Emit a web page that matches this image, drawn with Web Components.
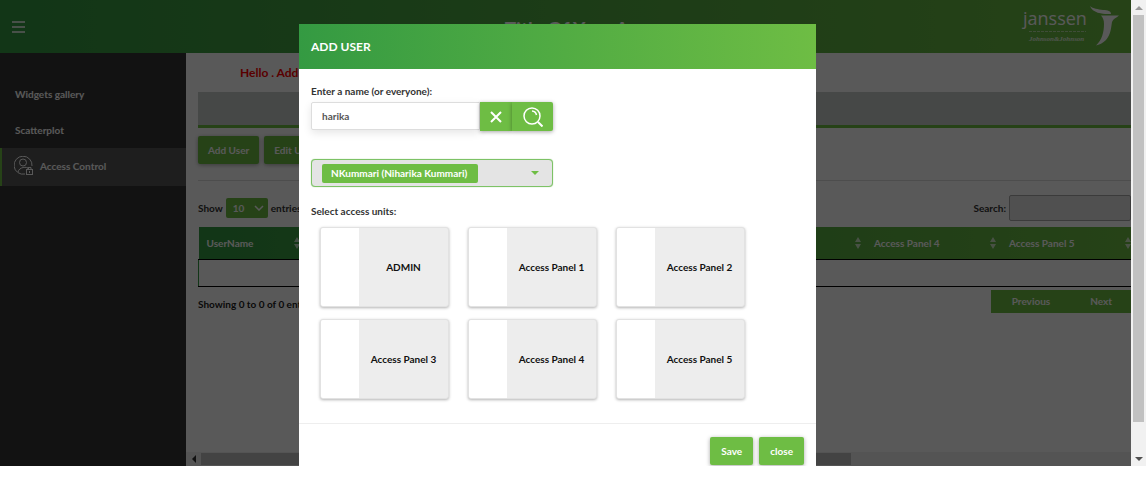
<!DOCTYPE html>
<html lang="en">
<head>
<meta charset="utf-8">
<title>Access Control</title>
<style>
html,body{margin:0;height:100%;overflow:hidden;background:#fff}
body{font:bold 10px/16px Lato,"Open Sans",sans-serif;color:#333;
--green:#6ebd44;--deep:#349a42}
</style>
</head>
<body>
<app-window></app-window>
<script>
const base = `*{box-sizing:border-box}
button,input,select{font:inherit;color:inherit;margin:0;border:0;outline:0}
svg{display:block}
.btn{background:var(--green);color:#fff;border-radius:2px;box-shadow:0 1px 4px rgba(0,0,0,.35);height:28px;padding:0 11px;white-space:nowrap}`;

function component(name, css, html) {
  const template = document.createElement('template');
  template.innerHTML = `<style>${base}${css}</style>${html}`;
  customElements.define(name, class extends HTMLElement {
    constructor() {
      super();
      this.attachShadow({ mode: 'open' }).append(template.content.cloneNode(true));
    }
  });
}

component('brand-logo', `:host{display:block}`, `
<svg width="98" height="42" viewBox="0 0 98 42" fill="#fff" role="img" aria-label="Janssen">
<text x="2" y="19" font-family="Open Sans,sans-serif" font-size="18" font-weight="400">janssen</text>
<path d="M8 25.500H65" stroke="#fff" stroke-width="1" stroke-dasharray="3 1" opacity=".5"/>
<text x="8" y="35" font-family="Liberation Serif,serif" font-style="italic" font-weight="bold" font-size="7" opacity=".8">Johnson&amp;Johnson</text>
<path d="M69 0C72 3 77 3 82 4C87 4 90 5 90 8L86 8C82 8 71 7 69 0Z"/>
<path d="M80 9.500H98C95 12 92 13 91 16C90 22 90 28 85 34C82 37 78 39 75 39.500C81 34 83 26 83 18C83 14 82 12 80 9.500Z"/>
</svg>`);

component('app-header', `
:host{display:grid;grid-template-columns:1fr auto 1fr;align-items:center;height:53px;
padding:0 12px;background:linear-gradient(90deg,var(--deep),var(--green));color:#fff}
h1{margin:0;padding:4px 0 0 24px;font-size:19px;line-height:24px}
button{width:16px;height:16px;padding:0;background:none}
brand-logo{justify-self:end}`, `
<button aria-label="Menu"><svg width="14" height="14" viewBox="0 0 14 14" stroke="#fff" stroke-width="1.500"><path d="M0 2H13M0 7H13M0 12H13"/></svg></button>
<h1>Title Of Your App</h1><brand-logo></brand-logo>`);

component('nav-item', `
:host{display:block}
a{display:flex;align-items:center;gap:6px;height:36px;padding:0 15px;color:#fff;text-decoration:none}
:host([active]) a{height:38px;padding:0 12px 2px;background:#585858;border-left:2px solid var(--green)}`, `
<a href="#"><slot name="icon"></slot><span><slot></slot></span></a>`);

component('side-nav', `
:host{display:block;padding-top:23px;background:#363636}
svg{flex:none}`, `
<nav><nav-item>Widgets gallery</nav-item><nav-item>Scatterplot</nav-item>
<nav-item active><svg slot="icon" width="20" height="20" viewBox="0 0 20 20" fill="none" stroke="#fff"><path d="M11 18A9 9 0 1 1 18 10M4 16C5 11 13 10 15 13"/><circle cx="9" cy="6.500" r="3.500"/><rect x="12.500" y="13.500" width="6" height="5"/><path d="M14 13V11.500H17V13M15.500 15V17"/></svg>Access Control</nav-item></nav>`);

component('sort-mark', `:host{display:block}`, `
<svg width="6" height="12" viewBox="0 0 6 12" fill="#fff" opacity=".7"><path d="M3 0L6 5H0ZM3 12L6 7H0Z"/></svg>`);

component('scroll-bar', `
:host{display:flex;background:#f1f1f1;color:#505050}
:host([vertical]){flex-direction:column;align-items:center;width:15px}
:host(:not([vertical])){align-items:center;height:14px}
.arrow{flex:none;display:grid;place-items:center;width:15px;height:15px}
.track{flex:1;display:flex}
.track i{background:#c1c1c1}
:host([vertical]) .track{flex-direction:column;width:11px}
:host([vertical]) .track i{height:calc(100% - 29px)}
:host(:not([vertical])) .track{height:12px}
:host(:not([vertical])) .track i{width:71%}`, `
<span class="arrow"><slot name="arrow"></slot></span><span class="track"><i></i></span><span class="arrow"><slot name="end"></slot></span>`);

component('user-table', `
:host{display:block}
.tools,.foot{display:flex;justify-content:space-between}
.tools{align-items:center;height:46px;padding-top:7px}
label{display:flex;align-items:center;gap:3px}
.pick{display:grid;align-items:center}
.pick>*{grid-area:1/1}
.pick select{appearance:none;width:42px;height:20px;padding:0 7px;background:var(--green);color:#fff;border-radius:2px}
.pick svg{justify-self:end;margin-right:4px;pointer-events:none}
.search input{width:122px;height:26px;background:#e4e4e4;border:1px solid #aaa;border-radius:2px}
.wrap{overflow:hidden}
table{width:calc(100% + 5px);table-layout:fixed;border-collapse:collapse}
thead{background:linear-gradient(90deg,var(--deep),var(--green))}
th{height:32px;padding:0 5px 0 8px;text-align:left;color:#fff;border-bottom:1px solid #000}
th div{display:flex;justify-content:space-between;align-items:center}
th sort-mark{margin-left:auto}
td{height:27px;padding:0;border-bottom:1px solid #000}
tbody{border-left:1px solid var(--deep)}
.foot{padding-top:3px}
.foot p{margin:0;padding-top:6px;color:#222}
.pages{display:flex;background:var(--green);height:23px}
.pages button{background:none;color:#fff;padding:0 19px 0 21px}`, `
<div class="tools"><label>Show <span class="pick"><select><option>10</option></select><svg width="10" height="6" viewBox="0 0 10 6" fill="none" stroke="#fff" stroke-width="1.500"><path d="M1 1L5 5L9 1"/></svg></span> entries</label>
<label class="search">Search: <input type="search"></label></div>
<div class="wrap"><table><colgroup><col style="width:106px"><col><col><col><col><col style="width:135px"><col style="width:135px"></colgroup>
<thead><tr><th><div>UserName<sort-mark></sort-mark></div></th><th></th><th></th><th></th><th><div><sort-mark></sort-mark></div></th><th><div>Access Panel 4<sort-mark></sort-mark></div></th><th><div>Access Panel 5<sort-mark></sort-mark></div></th></tr></thead>
<tbody><tr><td colspan="7"></td></tr></tbody></table></div>
<div class="foot"><p>Showing 0 to 0 of 0 entries</p><div class="pages"><button>Previous</button><button>Next</button></div></div>`);

component('access-page', `
:host{display:flex;flex-direction:column;min-width:0;overflow:hidden;background:#fff}
main{flex:1;padding:12px 0 0 12px}
.hello{margin:0;padding-left:42px;font-size:12px;line-height:16px;color:red}
.bar{height:36px;margin-top:11px;background:#c8cdcb;border-bottom:3px solid var(--green)}
.actions{display:flex;gap:5px;padding:8px 0 16px;border-bottom:1px solid #ddd}
.actions .btn{padding:0 10px}`, `
<main><p class="hello">Hello . Add</p><div class="bar"></div>
<div class="actions"><button class="btn">Add User</button><button class="btn">Edit User</button></div>
<user-table></user-table></main>
<scroll-bar><svg slot="arrow" width="4" height="8" viewBox="0 0 4 8" fill="#333"><path d="M4 0V8L0 4Z"/></svg></scroll-bar>`);

component('access-card', `
:host{display:block}
label{display:grid;grid-template-columns:38px 1fr;align-items:center;height:80px;background:#ededed;border:1px solid #e2e2e2;border-radius:3px;box-shadow:0 1px 3px rgba(0,0,0,.3);overflow:hidden;text-align:center;color:#111;white-space:nowrap}
input{appearance:none;height:100%;background:#fff}`, `
<label><input type="checkbox"><span><slot></slot></span></label>`);

component('add-user-dialog', `
:host{display:block;width:517px;max-width:100%;background:#fff}
header{display:flex;align-items:center;height:45px;padding:0 12px;background:linear-gradient(90deg,var(--deep),var(--green));color:#fff}
h2{margin:0;font-size:12px;line-height:16px}
.body{padding:14px 12px 24px;border-bottom:1px solid #eee}
.body>label,legend{display:block;padding:0}
.find{display:flex;align-items:flex-start;width:242px;margin:3px 0 28px}
.find input{flex:1;min-width:0;height:28px;padding:0 10px;background:#fff;border:1px solid #ddd;border-radius:2px 0 0 2px;box-shadow:0 3px 8px rgba(0,0,0,.1);color:#555}
.find button{display:grid;place-items:center;width:32px;height:29px;padding:0;border-radius:0}
.find button:last-child{width:41px;border-radius:0 2px 2px 0}
.user{display:grid;align-items:center;width:242px;height:28px;padding:0 10px;background:#e4e4e4;border:1px solid #7dc266;border-radius:4px;box-shadow:0 0 1px #7dc266}
.user>*{grid-area:1/1}
.chip{width:156px;height:19px;background:var(--green);border-radius:2px}
.user select{appearance:none;width:100%;padding:0 9px;background:none;color:#fff}
.user svg{justify-self:end;margin-right:3px;pointer-events:none}
fieldset{margin:16px 0 0;padding:0;border:0;min-width:0}
.cards{display:grid;grid-template-columns:repeat(3,129px);gap:12px 19px;padding:8px 0 0 9px}
footer{display:flex;justify-content:flex-end;gap:6px;padding:13px 12px}`, `
<header><h2>ADD USER</h2></header>
<div class="body"><label for="name">Enter a name (or everyone):</label>
<div class="find"><input id="name" type="text" value="harika"><button class="btn" aria-label="Clear"><svg width="12" height="12" viewBox="0 0 12 12" stroke="#fff" stroke-width="2"><path d="M1 1L11 11M11 1L1 11"/></svg></button><button class="btn" aria-label="Search"><svg width="20" height="20" viewBox="0 0 20 20" fill="none" stroke="#fff" stroke-width="1.500"><circle cx="9" cy="9" r="8"/><path d="M9 4A5 5 0 0 1 13.500 8"/><path d="M15 15L19.500 19.500" stroke-width="2"/></svg></button></div>
<div class="user"><span class="chip"></span><select aria-label="User"><option>NKummari (Niharika Kummari)</option></select><svg width="8" height="4" viewBox="0 0 8 4" fill="#6ebd44"><path d="M0 0H8L4 4Z"/></svg></div>
<fieldset><legend>Select access units:</legend><div class="cards">
<access-card>ADMIN</access-card><access-card>Access Panel 1</access-card><access-card>Access Panel 2</access-card>
<access-card>Access Panel 3</access-card><access-card>Access Panel 4</access-card><access-card>Access Panel 5</access-card></div></fieldset></div>
<footer><button class="btn">Save</button><button class="btn">close</button></footer>`);

component('app-window', `
:host{display:grid;grid-template-columns:1fr 15px;height:calc(100% - 27px)}
.app{position:relative;display:grid;grid-template:auto 1fr/186px 1fr;min-width:0;min-height:0;overflow:hidden}
app-header{grid-column:1/-1}
.shade{position:absolute;inset:0;display:flex;justify-content:center;align-items:flex-start;padding:24px 16px 0 0;overflow:hidden;background:rgba(0,0,0,.65)}`, `
<div class="app"><app-header></app-header><side-nav></side-nav><access-page></access-page>
<div class="shade"><add-user-dialog role="dialog" aria-label="Add user"></add-user-dialog></div></div>
<scroll-bar vertical><svg slot="arrow" width="8" height="4" viewBox="0 0 8 4" fill="#999"><path d="M0 4H8L4 0Z"/></svg><svg slot="end" width="8" height="4" viewBox="0 0 8 4" fill="#505050"><path d="M0 0H8L4 4Z"/></svg></scroll-bar>`);
</script>
</body>
</html>
